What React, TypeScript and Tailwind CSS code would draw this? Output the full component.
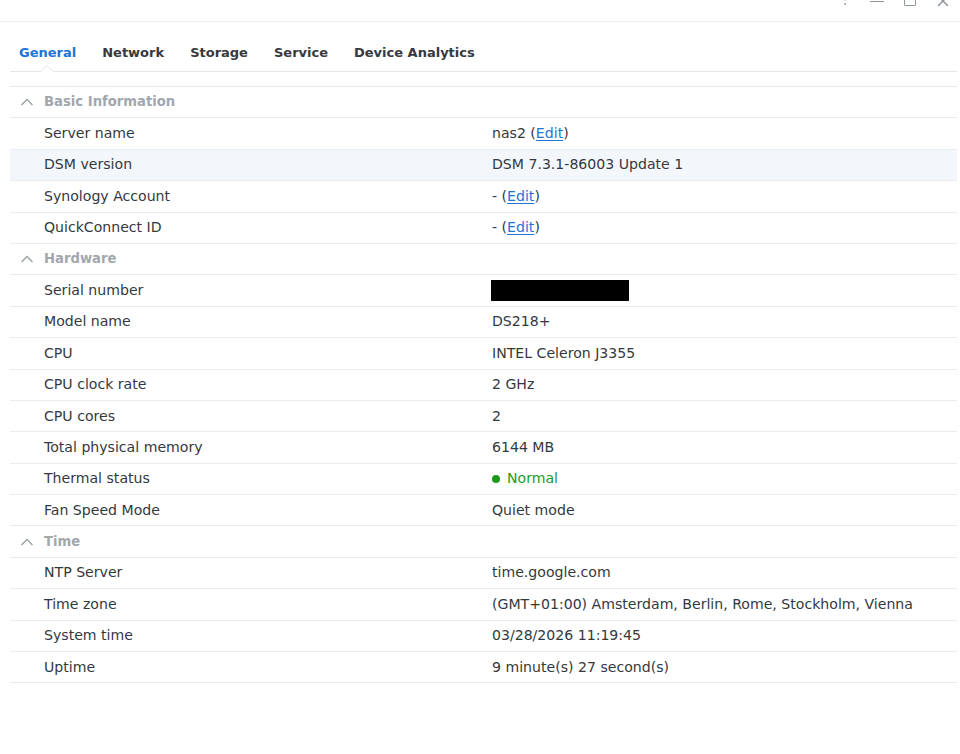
import React from "react";

type Row = { label: string; value: React.ReactNode; highlight?: boolean };
type Section = { title: string; rows: Row[] };

function EditLink() {
  return <span className="text-[#1f74d6] underline underline-offset-2">Edit</span>;
}

const SECTIONS: Section[] = [
  {
    title: "Basic Information",
    rows: [
      { label: "Server name", value: <>nas2 (<EditLink />)</> },
      { label: "DSM version", value: "DSM 7.3.1-86003 Update 1", highlight: true },
      { label: "Synology Account", value: <>- (<EditLink />)</> },
      { label: "QuickConnect ID", value: <>- (<EditLink />)</> },
    ],
  },
  {
    title: "Hardware",
    rows: [
      {
        label: "Serial number",
        value: <span className="block w-[138px] h-[21px] bg-black -ml-[1px]" />,
      },
      { label: "Model name", value: "DS218+" },
      { label: "CPU", value: "INTEL Celeron J3355" },
      { label: "CPU clock rate", value: "2 GHz" },
      { label: "CPU cores", value: "2" },
      { label: "Total physical memory", value: "6144 MB" },
      {
        label: "Thermal status",
        value: (
          <span className="flex items-center gap-[7px] text-[#1d9a1d]">
            <span className="w-[8px] h-[8px] rounded-full bg-[#1d9a1d]" />
            Normal
          </span>
        ),
      },
      { label: "Fan Speed Mode", value: "Quiet mode" },
    ],
  },
  {
    title: "Time",
    rows: [
      { label: "NTP Server", value: "time.google.com" },
      { label: "Time zone", value: "(GMT+01:00) Amsterdam, Berlin, Rome, Stockholm, Vienna" },
      { label: "System time", value: "03/28/2026 11:19:45" },
      { label: "Uptime", value: "9 minute(s) 27 second(s)" },
    ],
  },
];

const TABS = ["General", "Network", "Storage", "Service", "Device Analytics"];

function Chevron() {
  return (
    <svg width="14" height="8" viewBox="0 0 14 8" className="text-[#9aa0a6]">
      <polyline points="1.5,7 7,1.5 12.5,7" fill="none" stroke="currentColor" strokeWidth="1.4" />
    </svg>
  );
}

export default function App() {
  return (
    <div className="w-[960px] h-[754px] bg-white overflow-hidden text-[14.1px] text-[#33383e] font-['DejaVu_Sans',Verdana,sans-serif]">
      {/* window title bar, mostly scrolled off the top */}
      <div className="h-[22px] border-b border-[#eceff2] flex justify-end items-start gap-[20px] pr-[10px] text-[#8e949b] overflow-hidden">
        <svg width="10" height="14" viewBox="0 0 10 14" className="-mt-[8px]">
          <path
            d="M1.5 4 C1.5 1.8 3 0.8 5 0.8 C7 0.8 8.5 2 8.5 3.8 C8.5 6 5.2 6.2 5.2 8.6"
            fill="none"
            stroke="currentColor"
            strokeWidth="1.4"
          />
          <circle cx="5.2" cy="12" r="0.9" fill="currentColor" />
        </svg>
        <span className="-mt-[10px] w-[14px] h-[12px] border-b-[1.5px] border-[#8e949b]" />
        <span className="-mt-[6px] w-[12px] h-[12px] border-[1.5px] border-[#8e949b] rounded-[1px]" />
        <svg width="14" height="14" viewBox="0 0 14 14" className="-mt-[6px]">
          <path d="M2 2 L12 12 M12 2 L2 12" stroke="currentColor" strokeWidth="1.5" />
        </svg>
      </div>

      <div className="pl-[10px] pr-[3px]">
        {/* tabs */}
        <div className="relative h-[50px] border-b border-[#e3e7eb] flex items-center gap-[26px] pl-[9px] pt-[13px] text-[13px] font-bold">
          {TABS.map((t, i) => (
            <span key={t} className={i === 0 ? "text-[#1b74d8]" : "text-[#353a40]"}>
              {t}
            </span>
          ))}
          <svg
            width="14"
            height="7"
            viewBox="0 0 14 7"
            className="absolute left-[30px] -bottom-[1px]"
          >
            <path d="M0 7 L7 0.5 L14 7" fill="white" stroke="#e3e7eb" strokeWidth="1" />
          </svg>
        </div>

        {/* details */}
        <div className="mt-[14px] border-t border-[#e6e9ed]">
          {SECTIONS.map((s) => (
            <div key={s.title}>
              <div className="h-[31.4px] border-b border-[#e9ecef] flex items-center">
                <span className="w-[34px] pl-[10px] flex">
                  <Chevron />
                </span>
                <span className="text-[13.2px] font-bold text-[#a2a7ad]">{s.title}</span>
              </div>
              {s.rows.map((r) => (
                <div
                  key={r.label}
                  className={
                    "h-[31.4px] border-b border-[#e9ecef] flex items-center " +
                    (r.highlight ? "bg-[#f3f7fc]" : "")
                  }
                >
                  <span className="w-[482px] pl-[34px]">{r.label}</span>
                  <span className="flex items-center">{r.value}</span>
                </div>
              ))}
            </div>
          ))}
        </div>
      </div>
    </div>
  );
}
